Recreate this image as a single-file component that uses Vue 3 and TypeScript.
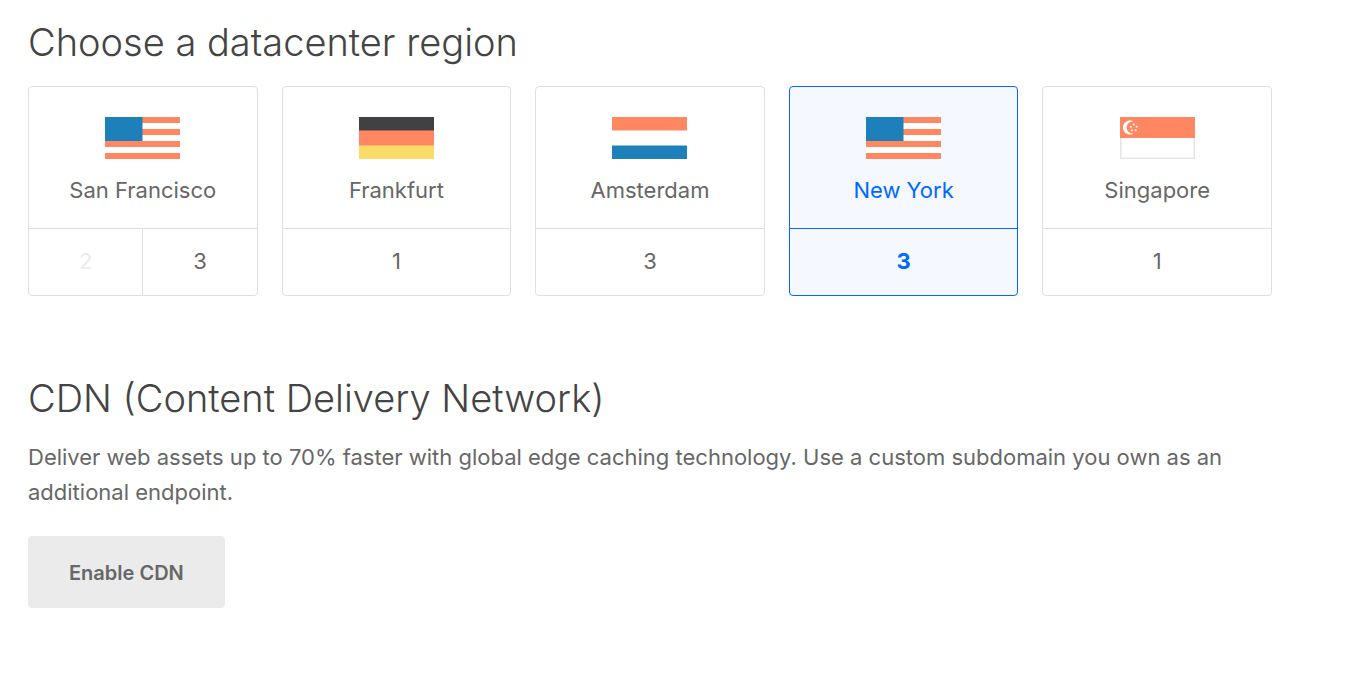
<script setup lang="ts">
import { ref } from 'vue'

type Flag = 'us' | 'de' | 'nl' | 'sg'

interface Datacenter {
  number: number
  available: boolean
}

interface Region {
  id: string
  name: string
  flag: Flag
  datacenters: Datacenter[]
}

const regions: Region[] = [
  {
    id: 'sfo',
    name: 'San Francisco',
    flag: 'us',
    datacenters: [
      { number: 2, available: false },
      { number: 3, available: true },
    ],
  },
  { id: 'fra', name: 'Frankfurt', flag: 'de', datacenters: [{ number: 1, available: true }] },
  { id: 'ams', name: 'Amsterdam', flag: 'nl', datacenters: [{ number: 3, available: true }] },
  { id: 'nyc', name: 'New York', flag: 'us', datacenters: [{ number: 3, available: true }] },
  { id: 'sgp', name: 'Singapore', flag: 'sg', datacenters: [{ number: 1, available: true }] },
]

const selected = ref('nyc3')
const cdnEnabled = ref(false)

function key(region: Region, dc: Datacenter): string {
  return region.id + dc.number
}

function isActive(region: Region): boolean {
  return region.datacenters.some((dc) => key(region, dc) === selected.value)
}
</script>

<template>
  <main class="page">
    <section>
      <h2 class="title">Choose a datacenter region</h2>
      <div class="regions">
        <article
          v-for="region in regions"
          :key="region.id"
          class="region"
          :class="{ active: isActive(region) }"
        >
          <div class="place">
            <svg class="flag" viewBox="0 0 75 42" aria-hidden="true">
              <template v-if="region.flag === 'us'">
                <rect width="75" height="42" fill="#fff" />
                <path d="M0 0h75v6H0zM0 12h75v6H0zM0 24h75v6H0zM0 36h75v6H0z" fill="#ff8863" />
                <rect width="37.5" height="24" fill="#1e80bb" />
              </template>
              <template v-else-if="region.flag === 'de'">
                <rect width="75" height="42" fill="#ff8863" />
                <rect width="75" height="13.5" fill="#414042" />
                <rect y="28.5" width="75" height="13.5" fill="#fadd68" />
              </template>
              <template v-else-if="region.flag === 'nl'">
                <rect width="75" height="42" fill="#fff" />
                <rect width="75" height="13.5" fill="#ff8863" />
                <rect y="28.5" width="75" height="13.5" fill="#1e80bb" />
              </template>
              <template v-else>
                <rect x="0.75" y="0.75" width="73.5" height="40.5" fill="#fff" stroke="#e5e5e5" stroke-width="1.5" />
                <rect width="75" height="21" fill="#ff8863" />
                <path d="M14 4.8A7 7 0 1 0 14 16.2A5.9 5.9 0 1 1 14 4.8z" fill="#fff" />
                <g fill="#fff" fill-opacity="0.9">
                  <circle cx="13.8" cy="7.5" r="1.1" />
                  <circle cx="16.8" cy="9.8" r="1.1" />
                  <circle cx="15.7" cy="13.3" r="1.1" />
                  <circle cx="11.9" cy="13.3" r="1.1" />
                  <circle cx="10.8" cy="9.8" r="1.1" />
                </g>
              </template>
            </svg>
            <h3 class="name">{{ region.name }}</h3>
          </div>
          <div class="datacenters">
            <button
              v-for="dc in region.datacenters"
              :key="dc.number"
              type="button"
              class="datacenter"
              :disabled="!dc.available"
              :aria-label="`${region.name} ${dc.number}`"
              :aria-pressed="key(region, dc) === selected"
              @click="selected = key(region, dc)"
            >
              {{ dc.number }}
            </button>
          </div>
        </article>
      </div>
    </section>

    <section class="cdn">
      <h2 class="title">CDN (Content Delivery Network)</h2>
      <p class="text">
        Deliver web assets up to 70% faster with global edge caching technology. Use a custom
        subdomain you own as an additional endpoint.
      </p>
      <button type="button" class="enable" :aria-pressed="cdnEnabled" @click="cdnEnabled = !cdnEnabled">
        Enable CDN
      </button>
    </section>
  </main>
</template>

<style>
body {
  margin: 0;
  background: #fff;
}
</style>

<style scoped>
.page {
  box-sizing: border-box;
  padding: 16px 73px 48px 28px;
  font-family: Inter, "Open Sans", sans-serif;
  font-size: 22px;
  color: #676767;
}

.title {
  margin: 0;
  font-size: 38px;
  font-weight: 300;
  line-height: 52px;
  color: #444;
}

.regions {
  display: grid;
  grid-template-columns: repeat(5, 1fr);
  gap: 24px;
  margin-top: 18px;
}

.region {
  display: flex;
  flex-direction: column;
  border: 1px solid #dfdfdf;
  border-radius: 4px;
  overflow: hidden;
}

.place {
  display: flex;
  flex-direction: column;
  align-items: center;
  gap: 16px;
  padding: 30px 0 23px;
}

.flag {
  display: block;
  width: 75px;
  height: 42px;
}

.name {
  margin: 0;
  font-size: 22px;
  font-weight: 400;
  line-height: 30px;
}

.datacenters {
  display: flex;
  border-top: 1px solid #dfdfdf;
}

.datacenter {
  flex: 1;
  height: 66px;
  padding: 0 0 2px;
  border: 0;
  background: transparent;
  color: inherit;
  font: inherit;
  cursor: pointer;
}

.datacenter + .datacenter {
  border-left: 1px solid #dfdfdf;
}

.datacenter:disabled {
  color: #ebebeb;
  cursor: default;
}

.region.active {
  border-color: #0069ff;
  background: #f5f8ff;
  color: #0069ff;
}

.active .datacenters {
  border-color: #0069ff;
}

.datacenter[aria-pressed="true"] {
  font-weight: 700;
}

.cdn {
  margin-top: 76px;
}

.text {
  margin: 16px 0 26px;
  line-height: 35px;
}

.enable {
  height: 72px;
  padding: 2px 41px 0;
  border: 0;
  border-radius: 4px;
  background: #ebebeb;
  color: #676767;
  font-family: inherit;
  font-size: 20px;
  font-weight: 600;
  cursor: pointer;
}
</style>
